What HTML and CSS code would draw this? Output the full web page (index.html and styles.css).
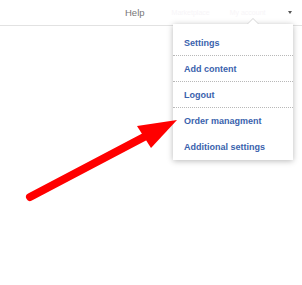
FILE: index.html
```html
<!doctype html>
<html>

<head>
	<link rel="stylesheet" href="styles.css">
</head>

<body>
	<div class="topbar">
		<a class="navlink help">Help</a>
		<a class="navlink faint">Marketplace</a>
		<a class="navlink faint">My account</a>
		<span class="caret"></span>
	</div>

	<div class="dropdown">
		<ul class="menu">
			<li><a>Settings</a></li>
			<li><a>Add content</a></li>
			<li><a>Logout</a></li>
			<li class="nosep"><a>Order managment</a></li>
			<li class="nosep"><a>Additional settings</a></li>
		</ul>
	</div>

	<svg class="pointer" width="302" height="285" viewBox="0 0 302 285">
		<line x1="30" y1="197" x2="146" y2="136" stroke="#ff0000" stroke-width="8" stroke-linecap="round" />
		<polygon points="177,120 137,126 151,148" fill="#ff0000" />
	</svg>
</body>

</html>
```
FILE: styles.css
```css
body {
	margin: 0;
	background: #fff;
	font-family: "Liberation Sans", Arial, Helvetica, sans-serif;
	position: relative;
	height: 285px;
	overflow: hidden;
}

.topbar {
	height: 24px;
	border-bottom: 1px solid #e2e2e2;
	display: flex;
	align-items: center;
	padding-left: 125px;
	padding-right: 10px;
	padding-bottom: 1px;
}

.navlink {
	font-size: 9.5px;
	color: #777;
	margin-right: 27px;
	white-space: nowrap;
}

.navlink.faint {
	color: #f7f5f8;
	font-size: 7px;
	margin-right: 20px;
}

.caret {
	width: 0;
	height: 0;
	border-left: 2px solid transparent;
	border-right: 2px solid transparent;
	border-top: 3px solid #555;
	margin-left: auto;
}

.dropdown {
	position: absolute;
	left: 173px;
	top: 24px;
	width: 120px;
	height: 136px;
	background: #fff;
	box-shadow: 0 1px 6px rgba(0, 0, 0, .28);
	box-sizing: border-box;
	padding-top: 6px;
}

.dropdown:before {
	content: "";
	position: absolute;
	top: -6px;
	left: 74px;
	width: 0;
	height: 0;
	border-left: 6px solid transparent;
	border-right: 6px solid transparent;
	border-bottom: 6px solid #d6d6d6;
}

.dropdown:after {
	content: "";
	position: absolute;
	top: -5px;
	left: 75px;
	width: 0;
	height: 0;
	border-left: 5px solid transparent;
	border-right: 5px solid transparent;
	border-bottom: 5px solid #fff;
}

.menu {
	list-style: none;
	margin: 0;
	padding: 0;
}

.menu li {
	height: 25px;
	border-bottom: 1px dotted #b8b8b8;
	display: flex;
	align-items: center;
	padding-left: 11px;
}

.menu li.nosep {
	border-bottom: 1px solid transparent;
}

.menu a {
	font-size: 9px;
	font-weight: bold;
	color: #3a62ad;
}

.pointer {
	position: absolute;
	left: 0;
	top: 0;
}
```
